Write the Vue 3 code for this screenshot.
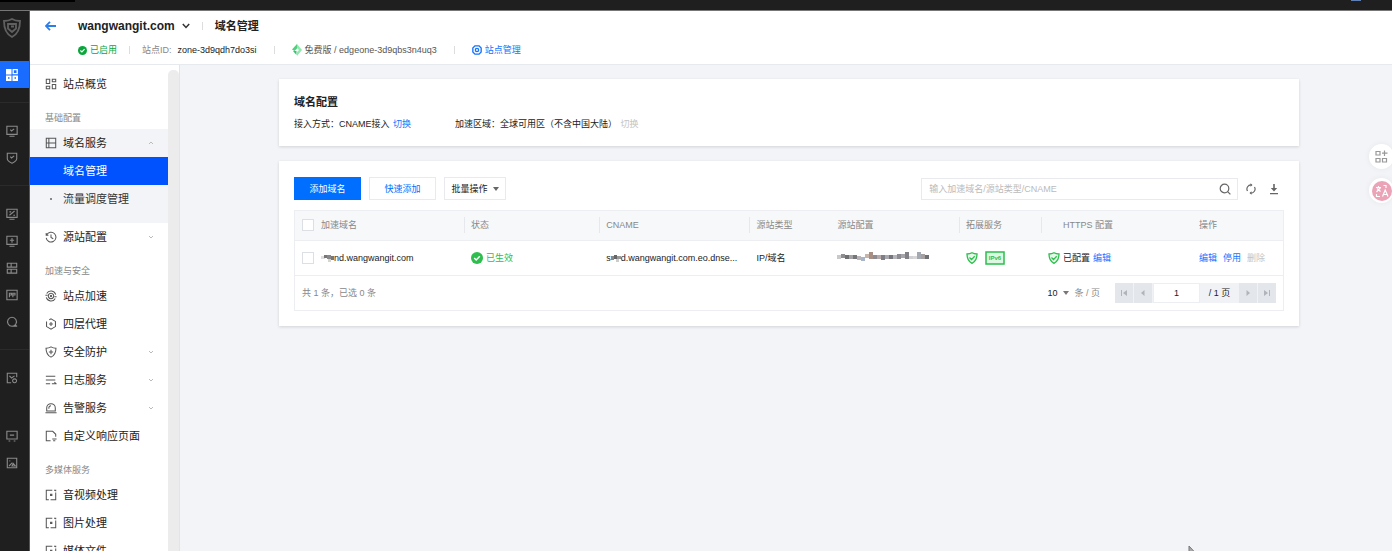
<script setup>

  import { ref, computed } from 'vue';

  const icons = {
    grid: 'M1.5 1.5h4v5h-4z M8.5 1.5h4v3h-4z M8.5 7.5h4v5h-4z M1.5 9.5h4v3h-4z',
    server: 'M1.5 1.5h11v11h-11z M1.5 7h11 M4.5 1.5v11',
    clock: 'M2 4.5A5.7 5.7 0 1 1 1.4 8 M1.4 2.4v2.6h2.6 M7 4v3.4l2.6 1.6',
    speed: 'M2 4.2A5.7 5.7 0 0 1 12.5 5.5 M12 9.8A5.7 5.7 0 0 1 1.5 8.5 M7 3.8a3.2 3.2 0 1 0 .01 0z M7 6.2a.8.8 0 1 0 .01 0z M.5 6h2.5 M11 8h2.5',
    hexagon: 'M5 2.1L7 1l5.2 3v6L7 13l-5.2-3V4 M7 4.8v4.4 M4.8 7h4.4',
    shield: 'M7 1c2 1.2 3.8 1.5 5.8 1.5C12.8 8 11 11 7 13 3 11 1.2 8 1.2 2.5 3.2 2.5 5 2.2 7 1z M7 4.5v5 M4.5 7h5',
    logs: 'M1 2.5h11 M1 7h11 M1 11.5h5 M8 11.5h5.5 M11 9.5l2 2',
    alarm: 'M.5 12.5h13 M2 10.5V7a5 5 0 0 1 10 0v3.5z M4.5 8V7a2.5 2.5 0 0 1 2.5-2.5',
    page: 'M6.5 12.5h-5v-11h7.5L12.500 5V8 M8.500 10.500h5 M9.500 12.500h2.500',
    media: 'M8.5 1.5h-7v11h3 M12.5 4v8.5h-6 M10.5 1.5h2v1 M6.500 6.200h1.500v1.500H6.500z'
  };

  const navGroups = [
    { items: [{ label: '站点概览', icon: 'grid' }] },
    {
      title: '基础配置',
      items: [
        { label: '域名服务', icon: 'server', open: true, children: ['域名管理', '流量调度管理'] },
        { label: '源站配置', icon: 'clock', arrow: true }
      ]
    },
    {
      title: '加速与安全',
      items: [
        { label: '站点加速', icon: 'speed' },
        { label: '四层代理', icon: 'hexagon' },
        { label: '安全防护', icon: 'shield', arrow: true },
        { label: '日志服务', icon: 'logs', arrow: true },
        { label: '告警服务', icon: 'alarm', arrow: true },
        { label: '自定义响应页面', icon: 'page' }
      ]
    },
    {
      title: '多媒体服务',
      items: [
        { label: '音视频处理', icon: 'media' },
        { label: '图片处理', icon: 'media' },
        { label: '媒体文件', icon: 'media' }
      ]
    }
  ];

  const railGroups = [
    [
      'M1 1.5h12v9.5H1z M4 13.2h6 M5 5.5l1.500 1.500 3-2.500',
      'M1.5 1.5h11v6.5c0 2.500-3 4-5.500 5-2.500-1-5.500-2.500-5.500-5z M5 5.500l1.500 1.500 3-2.500'
    ],
    [
      'M1 1.5h12v9.5H1z M4 13.2h6 M4 8.500l6-5 M4 4.500h2 M8.500 8.500h2',
      'M1 1.5h12v9.5H1z M4 13.2h6 M7 3.500v5.500 M4.500 6.200h5',
      'M1.5 1.5h11v4.500h-11z M1.500 8.500h11v4.500h-11z M6 1.500v4.500 M6 8.500v4.500',
      'M1 1.5h12v11H1z M4 9.500V5h2.500v2H4 M8 9.500V5h2.500v2H8',
      'M7 1.5a5.200 5.200 0 1 0 .01 0z M9 11.800h4 M10.500 10l2 2'
    ],
    ['M6 12.500H1.500v-11h11V6 M4 4.500l2.500 2.500L10 4.500 M10 8a2.300 2.300 0 1 0 .01 0z'],
    [
      'M1 1.5h12v9H1z M4.500 6h5 M3 12.800h2 M9 12.800h2',
      'M1.5 1.5h11v11h-11z M4 4.500h1 M3.500 10.500l4-4 M7 10.500h4L8.500 7.500z'
    ]
  ];

  // grey levels of the masked origin address
  const mosaic = [
    [0, 4, 4, '#c9c9cb'], [4, 3, 4, '#8e8e90'], [8, 4, 4, '#6f6f72'], [12, 4, 4, '#a3a3a5'],
    [16, 4, 4, '#77777b'], [20, 5, 4, '#b7b5b8'], [24, 6, 4, '#a8b5c8'], [28, 3, 4, '#c7b4aa'],
    [32, 1, 7, '#a78f86'], [36, 4, 4, '#8b8b90'], [40, 4, 4, '#b6a9a9'], [44, 4, 5, '#7e7e86'],
    [48, 4, 4, '#a8a8ae'], [52, 4, 4, '#75757b'], [56, 4, 4, '#b4b4b9'], [60, 3, 5, '#8c8c92'],
    [64, 3, 4, '#a6a6a8'], [68, 1, 7, '#818186'], [72, 5, 3, '#d0d0d2'], [76, 5, 3, '#d8d8d8'],
    [80, 1, 7, '#a5a9b2'], [84, 3, 5, '#a7a0a0'], [88, 4, 4, '#6f6f76']
  ];

  const active = ref('域名管理');
  const keyword = ref('');
  const pageSize = ref('10');
  const page = ref('1');
  const rows = ref([{ id: 1, checked: false }]);

  const selectedCount = computed(() => rows.value.filter(row => row.checked).length);

  const allChecked = computed({
    get: () => rows.value.every(row => row.checked),
    set: value => rows.value.forEach(row => { row.checked = value })
  });

</script>



<template>

  <div class="app">
    <div class="topbar"><span class="topbar__tab"></span><span class="topbar__dot"></span></div>

    <div class="shell">

      <nav class="rail" aria-label="产品">
        <a href="#" class="rail__logo" aria-label="EdgeOne">
          <svg width="18" height="20" viewBox="0 0 18 20"><path d="M9 1c2.500 1.500 5 2 8 2 0 8-2 13-8 16C3 16 1 11 1 3c3 0 5.500-.5 8-2z M5 6h8v4.500L9 14l-4-3.500z M8 8.500h3" /></svg>
        </a>
        <a href="#" class="rail__item rail__item--active" aria-label="站点">
          <svg width="12" height="12" viewBox="0 0 12 12">
            <path d="M0 0h5.500v5.500H0z M0 6.500h5.500V12H0z M6.500 6.500H12V12H6.500z" fill="#fff" stroke="none" />
            <path d="M7.200.7h4v4h-4z" stroke="#fff" />
            <path d="M2 9h1.500 M8.500 9H10" stroke="#1a6cff" />
          </svg>
        </a>
        <div class="rail__group" v-for="(group, index) in railGroups" :key="index">
          <a href="#" class="rail__item" v-for="path in group" :key="path" aria-label="工具">
            <svg width="12" height="12" viewBox="0 0 14 14"><path :d="path" /></svg>
          </a>
        </div>
      </nav>

      <div class="page">

        <header class="header">
          <a href="#" class="header__back" aria-label="返回">
            <svg width="11" height="10" viewBox="0 0 11 10"><path d="M5 .8L1 5l4 4.200 M1 5h10" fill="none" stroke="#2b7de9" stroke-width="1.800" /></svg>
          </a>
          <div class="header__main">
            <div class="header__row">
              <h1>wangwangit.com</h1>
              <svg class="header__chevron" width="8" height="6" viewBox="0 0 8 6"><path d="M.8 1L4 4.500 7.200 1" fill="none" stroke="#333" stroke-width="1.500" /></svg>
              <span class="divider"></span>
              <h2>域名管理</h2>
            </div>
            <div class="header__row header__row--meta">
              <span class="with-icon green">
                <svg width="9" height="9" viewBox="0 0 12 12"><circle cx="6" cy="6" r="6" fill="#0aa63c" /><path d="M3.200 6l2 2 3.600-3.800" fill="none" stroke="#fff" stroke-width="1.500" /></svg>
                已启用
              </span>
              <span class="divider"></span>
              <span class="meta-label">站点ID:</span>
              <span class="meta-value">zone-3d9qdh7do3si</span>
              <span class="divider divider--wide"></span>
              <span class="with-icon plan">
                <svg width="10" height="12" viewBox="0 0 10 12"><path d="M5 0v4.500L2.500 7 0 5.500z" fill="#4fd07c" /><path d="M5 0l5 6-5 6V8l2-2-2-2z" fill="#8fe8ae" /><path d="M1 7h3.500v4z" fill="#38c172" /></svg>
                免费版 / edgeone-3d9qbs3n4uq3
              </span>
              <span class="divider divider--wide"></span>
              <a href="#" class="with-icon">
                <svg width="10" height="10" viewBox="0 0 12 12" fill="none" stroke="#1473ff"><path d="M3.500 1h5L11 3.500v5L8.500 11h-5L1 8.500v-5z" stroke-width="1.600" /><circle cx="6" cy="6" r="2" stroke-width="1.600" /></svg>
                站点管理
              </a>
            </div>
          </div>
        </header>

        <div class="body">

          <aside class="sidebar">
            <nav class="menu">
              <template v-for="(group, index) in navGroups" :key="index">
                <h3 v-if="group.title" class="menu__title">{{ group.title }}</h3>
                <div v-for="item in group.items" :key="item.label" :class="{ menu__open: item.open }">
                  <a href="#" class="menu__item">
                    <svg class="menu__icon" width="12" height="12" viewBox="0 0 14 14"><path :d="icons[item.icon]" /></svg>
                    <span>{{ item.label }}</span>
                    <svg v-if="item.arrow || item.open" class="menu__arrow" width="6" height="4" viewBox="0 0 6 4">
                      <path :d="item.open ? 'M1 3l2-2 2 2' : 'M1 1l2 2 2-2'" />
                    </svg>
                  </a>
                  <a
                    href="#"
                    v-for="child in item.children"
                    :key="child"
                    class="menu__child"
                    :class="{ 'menu__child--active': active === child }"
                    @click.prevent="active = child"
                  >{{ child }}</a>
                </div>
              </template>
            </nav>
            <div class="scrollbar"></div>
          </aside>

          <main class="content">

            <section class="card card--config">
              <h2>域名配置</h2>
              <div class="config">
                <span>接入方式：CNAME接入 <a href="#">切换</a></span>
                <span>加速区域：全球可用区（不含中国大陆） <a class="disabled">切换</a></span>
              </div>
            </section>

            <section class="card card--list">

              <div class="toolbar">
                <button type="button" class="btn btn--primary">添加域名</button>
                <button type="button" class="btn btn--link">快速添加</button>
                <button type="button" class="btn btn--menu">
                  批量操作
                  <svg width="6" height="4" viewBox="0 0 6 4"><path d="M0 0h6L3 4z" fill="#666" /></svg>
                </button>
                <form class="search" @submit.prevent>
                  <input type="text" v-model="keyword" placeholder="输入加速域名/源站类型/CNAME" aria-label="搜索域名">
                  <button type="submit" aria-label="搜索">
                    <svg width="12" height="12" viewBox="0 0 12 12" fill="none" stroke="#666" stroke-width="1.200"><circle cx="5.500" cy="5.500" r="4.300" /><path d="M8.600 8.600l2.800 2.800" /></svg>
                  </button>
                </form>
                <button type="button" class="tool" aria-label="刷新">
                  <svg width="10" height="12" viewBox="0 0 10 12" fill="none" stroke="#666" stroke-width="1.200"><path d="M1.500 8A4 4 0 0 1 5.500 2 M8.500 4A4 4 0 0 1 4.500 10" /><path d="M4.500.3L6.500 2l-2 1.800z M5.500 8.200L3.500 10l2 1.800z" fill="#666" stroke="none" /></svg>
                </button>
                <button type="button" class="tool" aria-label="下载">
                  <svg width="10" height="12" viewBox="0 0 10 12"><path d="M4.200 1h1.600v4h2.400L5 8.500 1.800 5h2.400z M1 10h8v1.200H1z" fill="#666" /></svg>
                </button>
              </div>

              <div class="grid">
                <table>
                  <thead>
                    <tr>
                      <th class="col-domain">
                        <label class="check"><input type="checkbox" v-model="allChecked">加速域名</label>
                      </th>
                      <th class="col-status">状态</th>
                      <th class="col-cname">CNAME</th>
                      <th class="col-type">源站类型</th>
                      <th class="col-origin">源站配置</th>
                      <th class="col-service">拓展服务</th>
                      <th class="col-https">HTTPS 配置</th>
                      <th class="col-action">操作</th>
                    </tr>
                  </thead>
                  <tbody>
                    <tr v-for="row in rows" :key="row.id">
                      <td>
                        <label class="check">
                          <input type="checkbox" v-model="row.checked">
                          <span class="masked">
                            <svg width="13" height="8" viewBox="0 0 13 8"><path d="M0 2h4v3H0z" fill="#ddd" /><path d="M3 1h3v3H3z" fill="#777" /><path d="M6 1h4v4H6z" fill="#888" /><path d="M10 2h3v4h-3z" fill="#777" /><path d="M7 5h3v3H7z" fill="#d5d5cf" /></svg>nd.wangwangit.com
                          </span>
                        </label>
                      </td>
                      <td>
                        <span class="with-icon green green--light">
                          <svg width="12" height="12" viewBox="0 0 12 12"><circle cx="6" cy="6" r="6" fill="#2dbe4e" /><path d="M3.200 6l2 2 3.600-3.800" fill="none" stroke="#fff" stroke-width="1.500" /></svg>
                          已生效
                        </span>
                      </td>
                      <td>
                        <span class="masked">s<svg width="10" height="8" viewBox="0 0 10 8"><path d="M0 2h3v4H0z" fill="#888" /><path d="M3 1h3v4H3z" fill="#666" /><path d="M6 2h4v3H6z" fill="#999" /><path d="M5 5h3v3H5z" fill="#ccc" /></svg>d.wangwangit.com.eo.dnse...</span>
                      </td>
                      <td>IP/域名</td>
                      <td>
                        <svg class="mosaic" width="92" height="10" viewBox="0 0 92 10">
                          <rect v-for="block in mosaic" :key="block[0]" :x="block[0]" :y="block[1]" width="4" :height="block[2]" :fill="block[3]" />
                        </svg>
                      </td>
                      <td>
                        <span class="services">
                          <svg class="safe" width="12" height="12" viewBox="0 0 12 12"><path d="M6 .8c1.600.9 3.200 1.200 5 1.200 0 4.800-1.200 7.500-5 9.300C2.200 9.500 1 6.800 1 2c1.800 0 3.400-.3 5-1.200z M3.500 5.500l2 2 3.200-3.200" /></svg>
                          <svg width="20" height="14" viewBox="0 0 20 14"><rect x="1" y="1" width="18" height="12" fill="#dcf7e2" stroke="#2dbe4e" stroke-width="1.500" /><text x="10" y="9" text-anchor="middle" class="tag">IPv6</text></svg>
                        </span>
                      </td>
                      <td>
                        <span class="with-icon">
                          <svg class="safe" width="12" height="12" viewBox="0 0 12 12"><path d="M6 .8c1.600.9 3.200 1.200 5 1.200 0 4.800-1.200 7.500-5 9.300C2.200 9.500 1 6.800 1 2c1.800 0 3.400-.3 5-1.200z M3.500 5.500l2 2 3.200-3.200" /></svg>
                          已配置 <a href="#">编辑</a>
                        </span>
                      </td>
                      <td>
                        <span class="actions">
                          <a href="#">编辑</a>
                          <a href="#">停用</a>
                          <a class="disabled">删除</a>
                        </span>
                      </td>
                    </tr>
                  </tbody>
                </table>

                <div class="footer">
                  <span>共 {{ rows.length }} 条，已选 {{ selectedCount }} 条</span>
                  <div class="flex-1"></div>
                  <label class="size">
                    <select v-model="pageSize">
                      <option>10</option>
                      <option>20</option>
                      <option>50</option>
                    </select>
                    <svg width="6" height="4" viewBox="0 0 6 4"><path d="M0 0h6L3 4z" fill="#777" /></svg>
                    条 / 页
                  </label>
                  <div class="pager">
                    <button type="button" disabled aria-label="首页"><svg width="6" height="6" viewBox="0 0 6 6"><path d="M0 0h1v6H0z M6 0v6L2 3z" /></svg></button>
                    <button type="button" disabled aria-label="上一页"><svg width="6" height="6" viewBox="0 0 6 6"><path d="M4.500 0v6L1 3z" /></svg></button>
                    <input type="text" v-model="page" aria-label="页码">
                    <span class="pager__total">/ 1 页</span>
                    <button type="button" disabled aria-label="下一页"><svg width="6" height="6" viewBox="0 0 6 6"><path d="M1.500 0v6L5 3z" /></svg></button>
                    <button type="button" disabled aria-label="末页"><svg width="6" height="6" viewBox="0 0 6 6"><path d="M0 0v6l4-3z M5 0h1v6H5z" /></svg></button>
                  </div>
                </div>
              </div>

            </section>

          </main>

        </div>
      </div>
    </div>

    <div class="floating">
      <button type="button" class="floating__apps" aria-label="应用">
        <svg width="13" height="13" viewBox="0 0 13 13" fill="none" stroke="#999" stroke-width="1.200"><path d="M1 1.500h4v3.500H1z M1 8.500h4V12H1z M7.500 8.500h4V12h-4z M9.500.5v5.500 M7 3.200h5.500" /></svg>
      </button>
      <button type="button" class="floating__translate" aria-label="翻译">
        <svg width="20" height="20" viewBox="0 0 20 20"><circle cx="10" cy="10" r="10" fill="#eba3b7" /><path d="M4 6.500h5 M6.500 5v1.500 M8.500 6.500L4.500 11 M5 7.500l3.500 3 M10.500 15.500l2.700-6.500 2.800 6.500 M11.500 13.500h3.500 M11.500 4.500h2.500v2.500 M4.500 13v2.500H8" fill="none" stroke="#fff" stroke-width="1.200" /></svg>
      </button>
    </div>

    <svg class="cursor" width="9" height="12" viewBox="0 0 9 12"><path d="M1 1v10l2.500-2.500H8z" fill="#aaa" stroke="#777" /></svg>
  </div>

</template>



<style>

  body {
    margin: 0;
  }

</style>

<style scoped>

  /*==========Base==========*/
    .app, .app * {
      box-sizing: border-box;
    }
    .app {
      display: flex;
      flex-direction: column;
      height: 100vh;
      overflow: hidden;
      font: 9px/16px "Liberation Sans", "Noto Sans CJK SC", sans-serif;
      color: #222;
      background: #f3f4f8;
    }
    h1, h2, h3 {
      margin: 0;
    }
    a {
      color: #1473ff;
      text-decoration: none;
    }
    button, input, select {
      margin: 0;
      padding: 0;
      border: 0;
      background: none;
      font: inherit;
      color: inherit;
    }
    svg {
      flex: none;
    }
    .disabled {
      color: #c4c4c4;
    }
    .flex-1 {
      flex: 1;
    }
    .with-icon {
      display: flex;
      align-items: center;
      gap: 3px;
    }
    .green {
      color: #0aa63c;
    }
    .green--light {
      color: #2dbe4e;
    }

  /*==========Top bar==========*/
    .topbar {
      display: flex;
      justify-content: space-between;
      flex: none;
      height: 11px;
      padding-right: 31px;
      background: #1f1f1f;
      border-bottom: 1px solid #777;
    }
    .topbar__tab {
      width: 75px;
      height: 2px;
      background: #000;
    }
    .topbar__dot {
      width: 10px;
      height: 1px;
      background: #5f7fb5;
    }
    .shell {
      display: flex;
      flex: 1;
      min-height: 0;
    }

  /*==========Rail==========*/
    .rail {
      flex: none;
      width: 30px;
      overflow: hidden;
      background: #1f1f1f;
      border-right: 1px solid #555;
    }
    .rail svg {
      fill: none;
      stroke: #8a8a8a;
      stroke-width: 1.3;
    }
    .rail__logo {
      display: flex;
      align-items: center;
      height: 34px;
      margin-bottom: 16px;
      padding-left: 3px;
    }
    .rail .rail__logo svg {
      stroke: #606060;
      stroke-width: 1.8;
    }
    .rail__item {
      display: flex;
      align-items: center;
      height: 27px;
      padding-left: 6px;
    }
    .rail__item--active {
      background: #1a6cff;
    }
    .rail__group {
      margin-top: 14px;
      padding-top: 14px;
      border-top: 1px solid #2b2b2b;
    }
    .rail__group:last-child {
      padding-top: 16px;
      border-color: transparent;
    }

  /*==========Header==========*/
    .page {
      display: flex;
      flex-direction: column;
      flex: 1;
      min-width: 0;
    }
    .header {
      display: flex;
      gap: 22px;
      flex: none;
      height: 54px;
      padding: 5px 15px 0;
      background: #fff;
      border-bottom: 1px solid #e6e9ee;
    }
    .header__back {
      display: flex;
      align-items: center;
      height: 20px;
    }
    .header__row {
      display: flex;
      align-items: center;
      height: 20px;
    }
    .header__row h1 {
      font-size: 12px;
    }
    .header__row h2 {
      font-size: 11px;
    }
    .header__chevron {
      margin-left: 7px;
    }
    .header__row--meta {
      height: 28px;
    }
    .divider {
      width: 1px;
      height: 8px;
      margin: 0 12px;
      background: #ddd;
    }
    .divider--wide {
      margin: 0 17px;
    }
    .meta-label {
      margin-right: 6px;
      color: #888;
    }
    .plan {
      color: #555;
    }

  /*==========Sidebar==========*/
    .body {
      display: flex;
      flex: 1;
      min-height: 0;
    }
    .sidebar {
      display: flex;
      flex: none;
      width: 150px;
      overflow: hidden;
      background: #fff;
      border-right: 1px solid #e2e4ea;
    }
    .menu {
      flex: 1;
      padding-top: 5px;
    }
    .menu__title {
      height: 20px;
      margin: 10px 0 1px;
      padding-left: 15px;
      font-size: 9px;
      font-weight: 400;
      line-height: 20px;
      color: #888;
    }
    .menu__item {
      display: flex;
      align-items: center;
      gap: 6px;
      height: 28px;
      padding: 0 14px 0 15px;
      font-size: 11px;
      color: #222;
    }
    .menu__icon {
      fill: none;
      stroke: #555;
      stroke-width: 1.2;
    }
    .menu__arrow {
      margin-left: auto;
      fill: none;
      stroke: #bbb;
    }
    .menu__open {
      padding-bottom: 10px;
      background: #f3f4f8;
    }
    .menu__child {
      display: flex;
      align-items: center;
      height: 28px;
      padding-left: 20px;
      font-size: 11px;
      color: #333;
    }
    .menu__child::before {
      content: "";
      width: 2px;
      height: 2px;
      margin-right: 11px;
      background: #888;
    }
    .menu__child--active {
      color: #fff;
      background: #0052ff;
    }
    .menu__child--active::before {
      background: none;
    }
    .scrollbar {
      width: 11px;
      margin-top: 5px;
      border-radius: 5px 5px 0 0;
      background: #ececed;
    }

  /*==========Cards==========*/
    .content {
      flex: 1;
      min-width: 0;
      padding: 14px 93px 0 99px;
    }
    .card {
      padding: 0 15px;
      background: #fff;
      box-shadow: 0 1px 3px rgba(0, 0, 0, .14);
    }
    .card--config {
      height: 67px;
      margin-bottom: 15px;
      padding-top: 14px;
    }
    .card h2 {
      font-size: 11px;
      line-height: 18px;
    }
    .config {
      display: flex;
      gap: 44px;
      margin-top: 5px;
    }
    .config a {
      margin-left: 1px;
    }
    .card--list {
      padding-top: 16px;
      padding-bottom: 15px;
    }

  /*==========Toolbar==========*/
    .toolbar {
      display: flex;
      align-items: center;
      gap: 8px;
      margin-bottom: 10px;
    }
    .btn {
      height: 23px;
      width: 67px;
      border: 1px solid #e8eaee;
      cursor: pointer;
    }
    .btn--primary {
      border-color: #006eff;
      background: #006eff;
      color: #fff;
    }
    .btn--link {
      color: #006eff;
    }
    .btn--menu {
      display: flex;
      align-items: center;
      justify-content: center;
      gap: 5px;
      width: 62px;
    }
    .search {
      display: flex;
      align-items: center;
      width: 32%;
      height: 22px;
      margin-left: auto;
      padding: 0 6px 0 7px;
      border: 1px solid #e8eaee;
    }
    .search input {
      flex: 1;
      min-width: 0;
      outline: none;
    }
    .search input::placeholder {
      color: #bbb;
    }
    .search button, .tool {
      display: flex;
      align-items: center;
      cursor: pointer;
    }
    .tool {
      margin-right: 5px;
    }

  /*==========Table==========*/
    .grid {
      border: 1px solid #eceef2;
    }
    table {
      width: 100%;
      table-layout: fixed;
      border-collapse: collapse;
    }
    th {
      height: 29px;
      padding: 0 7px;
      background: linear-gradient(#e6e8ec, #e6e8ec) left center / 1px 16px no-repeat;
      font-weight: 400;
      text-align: left;
      color: #888;
    }
    th:first-child, .col-origin, .col-action {
      background: none;
    }
    thead tr {
      background: #f7f8fa;
    }
    td {
      height: 35px;
      padding: 0 7px;
      border-top: 1px solid #eceef2;
      border-bottom: 1px solid #eceef2;
      white-space: nowrap;
    }
    td svg {
      display: block;
    }
    .mosaic {
      margin-bottom: 4px;
    }
    .col-domain { width: 17.1%; }
    .col-status { width: 13.7%; }
    .col-cname { width: 15.2%; }
    .col-type { width: 8.2%; }
    .col-origin { width: 13%; }
    .col-service { width: 8.3%; }
    .col-https { width: 15.3%; padding-left: 22px; }
    .check {
      display: flex;
      align-items: center;
      gap: 7px;
    }
    .check input {
      appearance: none;
      width: 12px;
      height: 12px;
      border: 1px solid #dcdfe4;
      background: #fff;
    }
    .check input:checked {
      background: #006eff;
    }
    .masked {
      display: flex;
      align-items: center;
    }
    .services {
      display: flex;
      align-items: center;
      gap: 7px;
    }
    .safe {
      fill: #e4f8e8;
      stroke: #2dbe4e;
      stroke-width: 1.3;
    }
    .tag {
      font-size: 6px;
      font-weight: 700;
      fill: #2dbe4e;
    }
    .actions {
      display: flex;
      gap: 6px;
    }

  /*==========Footer==========*/
    .footer {
      display: flex;
      align-items: center;
      height: 34px;
      padding: 0 7px;
      color: #888;
    }
    .size {
      display: flex;
      align-items: center;
      gap: 5px;
      margin-right: 15px;
    }
    .size select {
      appearance: none;
      color: #222;
    }
    .pager {
      display: flex;
      gap: 1px;
      height: 20px;
      background: #f0f2f5;
      color: #222;
    }
    .pager button {
      display: flex;
      align-items: center;
      justify-content: center;
      width: 18px;
      background: #e3e6ea;
    }
    .pager svg {
      fill: #b0b5bc;
    }
    .pager input {
      width: 47px;
      border: 1px solid #eceef2;
      background: #fff;
      text-align: center;
    }
    .pager__total {
      width: 37px;
      line-height: 20px;
      text-align: center;
    }

  /*==========Floating==========*/
    .floating {
      position: fixed;
      top: 144px;
      right: -2px;
      display: flex;
      flex-direction: column;
      gap: 9px;
    }
    .floating button {
      display: flex;
      align-items: center;
      justify-content: center;
      width: 25px;
      height: 25px;
      border-radius: 50%;
      background: #fff;
      box-shadow: 0 0 6px rgba(0, 0, 0, .06);
    }
    .cursor {
      position: fixed;
      left: 1188px;
      bottom: -6px;
    }

</style>
